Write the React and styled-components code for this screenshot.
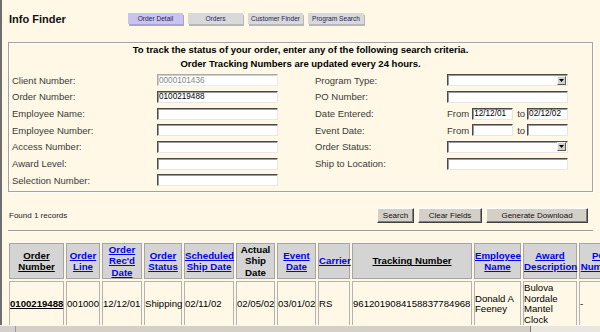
import React from 'react'
import styled, { createGlobalStyle } from 'styled-components'

const GlobalStyle = createGlobalStyle`
  html, body {
    margin: 0;
    padding: 0;
    background: #fff8e6;
    overflow: hidden;
  }
  body {
    font-family: "Liberation Sans", Arial, sans-serif;
    color: #000;
  }
`

const Page = styled.div`
  width: 600px;
  min-height: 332px;
  box-sizing: border-box;
  border-left: 2px solid #6e6e6e;
  padding: 0 7px 0 6px;
`

const TopBar = styled.header`
  display: flex;
  align-items: center;
  height: 38px;
`

const Title = styled.h1`
  margin: 0;
  width: 119px;
  padding-left: 1px;
  font-size: 11px;
  font-weight: bold;
  color: #111;
`

const Tabs = styled.nav`
  display: flex;
  gap: 5px;
  margin-top: -1px;
`

const Tab = styled.span`
  display: block;
  width: ${p => p.$w}px;
  height: 11px;
  line-height: 11px;
  text-align: center;
  font-size: 6.6px;
  color: #1e1e5a;
  background: ${p => (p.$active ? '#c8c4ee' : '#d9d9d9')};
  box-shadow: 1px 2px 0 ${p => (p.$active ? '#a7a3d2' : '#b7b7b7')};
`

const Panel = styled.section`
  margin-top: 4px;
  height: 150px;
  box-sizing: border-box;
  border: 1px solid #a3a3a3;
  box-shadow: inset 1px 1px 0 #fff, 1px 1px 0 #fff;
  padding-left: 3px;
`

const Intro = styled.p`
  margin: 0;
  padding-right: 3px;
  text-align: center;
  font-size: 9.5px;
  font-weight: bold;
  line-height: 13.5px;
`

const Form = styled.div`
  display: flex;
  margin-top: 2px;
`

const FieldGrid = styled.div`
  display: grid;
  grid-template-columns: ${p => p.$label}px 121px;
  grid-auto-rows: 16.67px;
  align-items: center;
  margin-left: ${p => p.$offset || 0}px;
`

const Label = styled.span`
  font-size: 9.5px;
  color: #3a3a3a;
  white-space: nowrap;
`

const TextBox = styled.input`
  display: block;
  width: ${p => p.$w || 121}px;
  height: 12px;
  box-sizing: border-box;
  margin: 0;
  padding: 0 1px;
  border: 1px solid;
  border-color: ${p => (p.$dim ? '#a9a9a9 #ececec #ececec #a9a9a9' : '#4a4a4a #e6e6e6 #e6e6e6 #4a4a4a')};
  box-shadow: inset 1px 1px 0 ${p => (p.$dim ? '#d0d0d0' : '#9a9a9a')};
  background: #fff;
  font-family: "Liberation Sans", Arial, sans-serif;
  font-size: 8.2px;
  color: ${p => (p.$dim ? '#858585' : '#000')};
  outline: none;
`

const SelectBox = styled.div`
  display: flex;
  justify-content: flex-end;
  align-items: center;
  width: 121px;
  height: 12px;
  box-sizing: border-box;
  padding-right: 1px;
  border: 1px solid;
  border-color: #4a4a4a #e6e6e6 #e6e6e6 #4a4a4a;
  box-shadow: inset 1px 1px 0 #9a9a9a;
  background: #fff;
`

const DropArrow = styled.span`
  display: flex;
  align-items: center;
  justify-content: center;
  width: 9px;
  height: 9px;
  box-sizing: border-box;
  background: #d4d0c8;
  border: 1px solid;
  border-color: #f4f4f4 #5a5a5a #5a5a5a #f4f4f4;
`

const DateRange = styled.div`
  display: flex;
  align-items: center;
  font-size: 9.5px;
  color: #3a3a3a;
`

const RangeWord = styled.span`
  margin-right: ${p => p.$gap}px;
`

const RangeTo = styled.span`
  margin: 0 2px 0 4px;
`

const Toolbar = styled.div`
  display: flex;
  align-items: center;
  justify-content: space-between;
  height: 15px;
  margin-top: 16px;
  padding-right: 5px;
`

const Found = styled.span`
  padding-left: 1px;
  font-size: 8px;
  color: #222;
`

const Buttons = styled.div`
  display: flex;
  gap: 4px;
`

const Button = styled.button`
  width: ${p => p.$w}px;
  height: 15px;
  margin: 0;
  padding: 0;
  box-sizing: border-box;
  background: #d4d0c8;
  border: 1px solid;
  border-color: #fff #404040 #404040 #fff;
  box-shadow: inset -1px -1px 0 #808080;
  font-family: "Liberation Sans", Arial, sans-serif;
  font-size: 8px;
  color: #111;
`

const Rule = styled.hr`
  margin: 7px 0 0;
  height: 0;
  border: 0;
  border-top: 1px solid #9d9d9d;
  border-bottom: 1px solid #fff;
`

const Results = styled.table`
  margin: 9px 0 0 -1px;
  table-layout: fixed;
  width: ${p => p.$w}px;
  border-collapse: separate;
  border-spacing: 2px;
`

const HeadCell = styled.th`
  width: ${p => p.$w}px;
  height: 36px;
  box-sizing: border-box;
  padding: 0;
  border: 1px solid #a5a5a5;
  background: #d4d4d4;
  font-size: 9.7px;
  font-weight: bold;
  line-height: 11.3px;
  text-align: center;
  vertical-align: middle;
  color: #000;
`

const HeadLink = styled.a`
  color: ${p => (p.$plain ? '#000' : '#0000ee')};
  text-decoration: ${p => (p.$bare ? 'none' : 'underline')};
`

const Cell = styled.td`
  box-sizing: border-box;
  padding: 1px 0;
  border: 1px solid #b3b3b3;
  font-size: 9.6px;
  line-height: 10.7px;
  text-align: left;
  vertical-align: middle;
  white-space: ${p => (p.$wrap ? 'normal' : 'nowrap')};
  overflow: visible;
`

const OrderLink = styled.a`
  font-weight: bold;
  color: #000;
  text-decoration: underline;
`

const ScrollBar = styled.div`
  position: fixed;
  left: 0;
  right: 0;
  bottom: 0;
  height: 6px;
  display: flex;
  background: #e9e6e0;
  border-top: 1px solid #f7f7f7;
`

const ScrollButton = styled.span`
  width: 16px;
  background: #d4d0c8;
  border-right: 1px solid #9a9a9a;
  display: flex;
  justify-content: center;
  padding-top: 2px;
  box-sizing: border-box;
`

const ScrollThumb = styled.span`
  width: 514px;
  background: #d4d0c8;
  border-right: 1px solid #7a7a7a;
`

const columns = [
  { label: 'Order Number', w: 55, plain: true },
  { label: 'Order Line', w: 34 },
  { label: "Order Rec'd Date", w: 40 },
  { label: 'Order Status', w: 38 },
  { label: 'Scheduled Ship Date', w: 50 },
  { label: 'Actual Ship Date', w: 39, plain: true, bare: true },
  { label: 'Event Date', w: 39 },
  { label: 'Carrier', w: 32 },
  { label: 'Tracking Number', w: 120, plain: true },
  { label: 'Employee Name', w: 47 },
  { label: 'Award Description', w: 54 },
  { label: 'PO Number', w: 40 },
]

const order = [
  '0100219488',
  '001000',
  '12/12/01',
  'Shipping',
  '02/11/02',
  '02/05/02',
  '03/01/02',
  'RS',
  '9612019084158837784968',
  'Donald A Feeney',
  'Bulova Nordale Mantel Clock',
  '-',
]

const leftFields = [
  { label: 'Client Number:', value: '0000101436', dim: true },
  { label: 'Order Number:', value: '0100219488' },
  { label: 'Employee Name:' },
  { label: 'Employee Number:' },
  { label: 'Access Number:' },
  { label: 'Award Level:' },
  { label: 'Selection Number:' },
]

const Arrow = () => (
  <svg width="5" height="3" viewBox="0 0 5 3">
    <path d="M0 0h5L2.5 3z" fill="#000" />
  </svg>
)

const Range = ({ from = '', to = '' }) => (
  <DateRange>
    <RangeWord $gap={3}>From</RangeWord>
    <TextBox $w={41} readOnly value={from} />
    <RangeTo>to</RangeTo>
    <TextBox $w={41} readOnly value={to} />
  </DateRange>
)

export default function App() {
  const tableWidth = columns.reduce((s, c) => s + c.w, 0) + (columns.length + 1) * 2

  return (
    <Page>
      <GlobalStyle />
      <TopBar>
        <Title>Info Finder</Title>
        <Tabs>
          <Tab $w={55} $active>Order Detail</Tab>
          <Tab $w={55}>Orders</Tab>
          <Tab $w={55}>Customer Finder</Tab>
          <Tab $w={56}>Program Search</Tab>
        </Tabs>
      </TopBar>

      <Panel>
        <Intro>
          To track the status of your order, enter any of the following search criteria.
          <br />
          Order Tracking Numbers are updated every 24 hours.
        </Intro>
        <Form>
          <FieldGrid $label={145}>
            {leftFields.map(f => (
              <React.Fragment key={f.label}>
                <Label>{f.label}</Label>
                <TextBox readOnly value={f.value || ''} $dim={f.dim} />
              </React.Fragment>
            ))}
          </FieldGrid>
          <FieldGrid $label={132} $offset={37}>
            <Label>Program Type:</Label>
            <SelectBox><DropArrow><Arrow /></DropArrow></SelectBox>
            <Label>PO Number:</Label>
            <TextBox readOnly value="" />
            <Label>Date Entered:</Label>
            <Range from="12/12/01" to="02/12/02" />
            <Label>Event Date:</Label>
            <Range />
            <Label>Order Status:</Label>
            <SelectBox><DropArrow><Arrow /></DropArrow></SelectBox>
            <Label>Ship to Location:</Label>
            <TextBox readOnly value="" />
          </FieldGrid>
        </Form>
      </Panel>

      <Toolbar>
        <Found>Found 1 records</Found>
        <Buttons>
          <Button $w={37}>Search</Button>
          <Button $w={64}>Clear Fields</Button>
          <Button $w={102}>Generate Download</Button>
        </Buttons>
      </Toolbar>
      <Rule />

      <Results $w={tableWidth}>
        <thead>
          <tr>
            {columns.map(c => (
              <HeadCell key={c.label} $w={c.w}>
                <HeadLink $plain={c.plain} $bare={c.bare}>{c.label}</HeadLink>
              </HeadCell>
            ))}
          </tr>
        </thead>
        <tbody>
          <tr>
            {order.map((v, i) => (
              <Cell key={i} $wrap={i === 9 || i === 10}>
                {i === 0 ? <OrderLink>{v}</OrderLink> : v}
              </Cell>
            ))}
          </tr>
        </tbody>
      </Results>

      <ScrollBar>
        <ScrollButton />
        <ScrollThumb />
      </ScrollBar>
    </Page>
  )
}
